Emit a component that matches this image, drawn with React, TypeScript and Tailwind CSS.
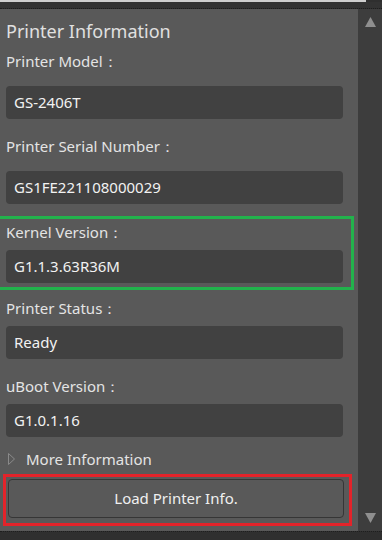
import React from 'react';

const font = { fontFamily: '"Segoe UI", "Noto Sans", "Open Sans", sans-serif' };

export default function App() {
  return (
    <div className="w-[382px] h-[540px] bg-[#2f2f2f] flex flex-col overflow-hidden" style={font}>
      <div className="h-[2px] w-[366px] bg-[#cfcfcf]" />
      <div className="h-[6px] bg-[#333333]" />
      <div className="flex h-[523px] border-t border-dotted border-[#1e1e1e]">
        <div className="w-[358px] bg-[#595959] flex flex-col">
          <div className="pl-[6px] pt-[10px] text-[18px] leading-[24px] text-[#e0e0e0]">Printer Information</div>
          <div className="pl-[6px] pt-[8px] text-[15px] leading-[20px] text-[#e4e4e4] mb-[15px]">Printer Model：</div>
          <div className="ml-[6px] w-[337px] h-[33px] rounded-[4px] bg-[#414141] flex items-center pl-[8px] text-[15px] text-[#f2f2f2]">
            GS-2406T
          </div>
          <div className="pl-[6px] pt-[17px] text-[15px] leading-[20px] text-[#e4e4e4] mb-[15px]">Printer Serial Number：</div>
          <div className="ml-[6px] w-[337px] h-[33px] rounded-[4px] bg-[#414141] flex items-center pl-[8px] text-[15px] text-[#f2f2f2]">
            GS1FE221108000029
          </div>
          <div className="mt-[12px] w-[354px] h-[74px] border-[3px] border-[#22b24c] border-l-0 flex flex-col">
            <div className="pl-[6px] pt-[3px] text-[15px] leading-[20px] text-[#e4e4e4] mb-[8px]">Kernel Version：</div>
            <div className="ml-[6px] w-[337px] h-[33px] rounded-[4px] bg-[#414141] flex items-center pl-[8px] text-[15px] text-[#f2f2f2]">
              G1.1.3.63R36M
            </div>
          </div>
          <div className="pl-[6px] pt-[8px] text-[15px] leading-[20px] text-[#e4e4e4] mb-[8px]">Printer Status：</div>
          <div className="ml-[6px] w-[337px] h-[33px] rounded-[4px] bg-[#414141] flex items-center pl-[8px] text-[15px] text-[#f2f2f2]">
            Ready
          </div>
          <div className="pl-[6px] pt-[17px] text-[15px] leading-[20px] text-[#e4e4e4] mb-[8px]">uBoot Version：</div>
          <div className="ml-[6px] w-[337px] h-[33px] rounded-[4px] bg-[#414141] flex items-center pl-[8px] text-[15px] text-[#f2f2f2]">
            G1.0.1.16
          </div>
          <div className="pl-[8px] pt-[12px] flex items-center gap-[11px] text-[15px] leading-[20px] text-[#e4e4e4]">
            <svg width="7" height="12" viewBox="0 0 7 12">
              <path d="M0.5 0.5 L6.5 6 L0.5 11.5 Z" fill="none" stroke="#8a8a8a" strokeWidth="1" />
            </svg>
            <span>More Information</span>
          </div>
          <div className="mt-[5px] ml-[3px] w-[349px] h-[52px] border-[3px] border-[#e3232a] p-[2px]">
            <button className="w-[336px] h-[39px] rounded-[4px] border border-[#363636] bg-[#595959] text-[15px] text-[#f0f0f0]">
              Load Printer Info.
            </button>
          </div>
        </div>
        <div className="flex-1 bg-[#3d3d3d] flex flex-col items-center justify-between pt-[8px] pb-[8px]">
          <svg width="11" height="10" viewBox="0 0 11 10">
            <path d="M5.5 0 L11 10 L0 10 Z" fill="#8f8f8f" />
          </svg>
          <svg width="11" height="10" viewBox="0 0 11 10">
            <path d="M0 0 L11 0 L5.5 10 Z" fill="#8f8f8f" />
          </svg>
        </div>
      </div>
      <div className="flex-1 border-t border-dotted border-[#1e1e1e] bg-[#2f2f2f]" />
    </div>
  );
}
